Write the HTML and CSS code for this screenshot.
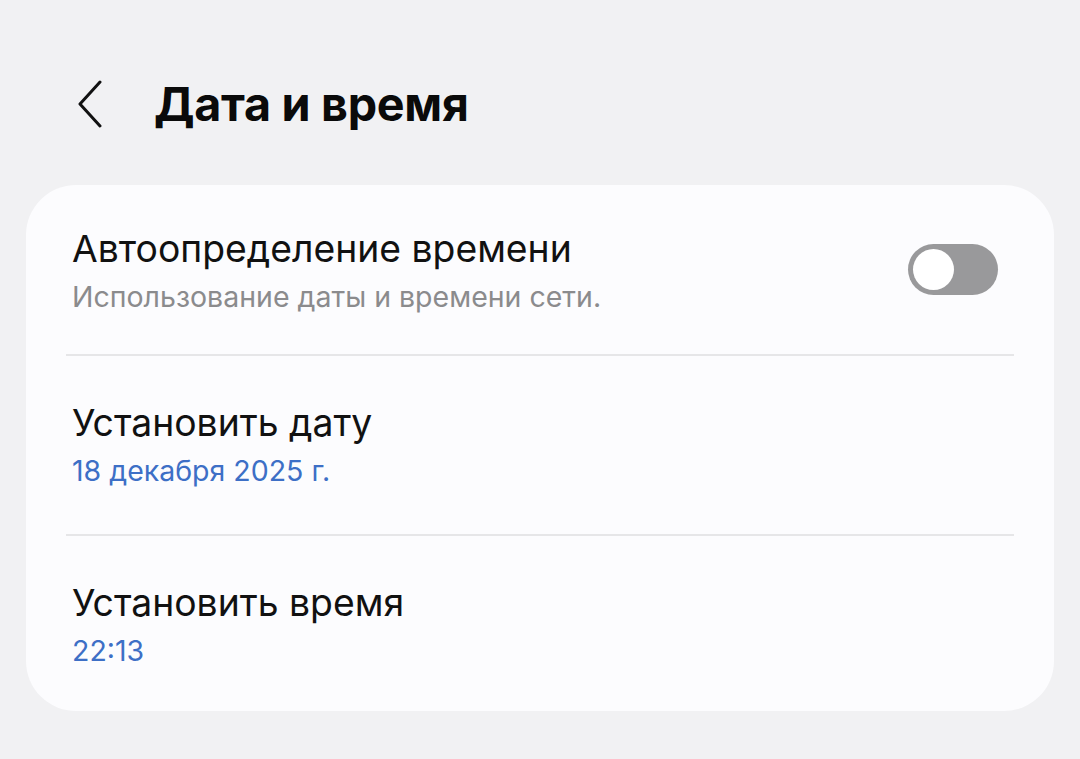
FILE: index.html
```html
<!DOCTYPE html>
<html lang="ru">
<head>
<meta charset="utf-8">
<link rel="stylesheet" href="styles.css">
</head>
<body>
<div class="page">
  <header class="topbar">
    <button class="back" aria-label="Назад">
      <svg width="28" height="48" viewBox="0 0 28 48"><path d="M24 2 L4 24 L24 46" fill="none" stroke="#111" stroke-width="3" stroke-linecap="round" stroke-linejoin="round"/></svg>
    </button>
    <h1 class="title">Дата и время</h1>
  </header>
  <section class="card">
    <div class="row row-first">
      <div class="texts">
        <div class="label">Автоопределение времени</div>
        <div class="sub">Использование даты и времени сети.</div>
      </div>
      <div class="toggle"><div class="knob"></div></div>
    </div>
    <div class="divider"></div>
    <div class="row">
      <div class="texts">
        <div class="label">Установить дату</div>
        <div class="value">18 декабря 2025 г.</div>
      </div>
    </div>
    <div class="divider"></div>
    <div class="row">
      <div class="texts">
        <div class="label">Установить время</div>
        <div class="value">22:13</div>
      </div>
    </div>
  </section>
</div>
</body>
</html>
```
FILE: styles.css
```css
html, body {
  margin: 0;
  padding: 0;
  background: #f1f1f3;
  font-family: "Inter", "Roboto", sans-serif;
}
.page {
  width: 1080px;
  height: 759px;
  padding: 0 26px;
  box-sizing: border-box;
}
.topbar {
  display: flex;
  align-items: center;
  height: 185px;
  padding-left: 50px;
  padding-top: 22px;
  box-sizing: border-box;
}
.back {
  background: none;
  border: 0;
  padding: 0;
  width: 28px;
  height: 48px;
  display: flex;
}
.title {
  margin: 0 0 0 50px;
  font-size: 46.7px;
  font-weight: 700;
  color: #0a0a0a;
  letter-spacing: -0.3px;
}
.card {
  background: #fcfcfe;
  border-radius: 50px;
  padding: 0 40px 0 40px;
  height: 526px;
  box-sizing: border-box;
}
.row {
  display: flex;
  align-items: center;
  justify-content: space-between;
  padding: 5px 6px 0;
  height: 178px;
  box-sizing: border-box;
}
.row-first {
  height: 169px;
  padding-top: 0;
}
.row-first .texts {
  padding-top: 8px;
}
.texts {
  display: flex;
  flex-direction: column;
}
.label {
  font-size: 37.3px;
  color: #111;
  line-height: 46px;
}
.sub {
  font-size: 28.5px;
  color: #8b8b8d;
  line-height: 49px;
}
.value {
  font-size: 28.5px;
  color: #3d6fc6;
  line-height: 49px;
}
.divider {
  height: 2px;
  background: #e6e6e8;
}
.toggle {
  width: 90px;
  height: 51px;
  border-radius: 26px;
  background: #99999b;
  position: relative;
  margin-right: 10px;
}
.knob {
  position: absolute;
  left: 5px;
  top: 5px;
  width: 41px;
  height: 41px;
  border-radius: 50%;
  background: #fff;
}
```
